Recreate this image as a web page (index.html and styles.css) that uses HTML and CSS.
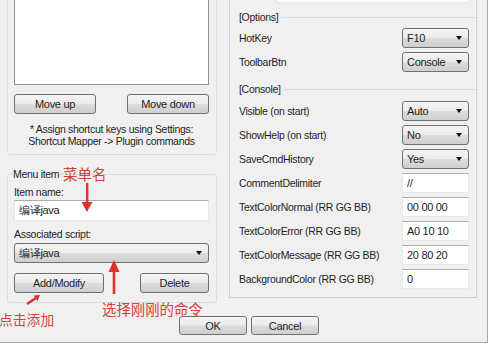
FILE: index.html
```html
<!DOCTYPE html>
<html>
<head>
<meta charset="utf-8">
<link rel="stylesheet" href="styles.css">
</head>
<body>
<div class="dialog">
  <div class="main">
    <div class="left">
      <div class="group group-list">
        <div class="listbox"></div>
        <div class="btn-row">
          <div class="btn w-move">Move up</div>
          <div class="btn w-move">Move down</div>
        </div>
        <p class="note">* Assign shortcut keys using Settings:<br>Shortcut Mapper -&gt; Plugin commands</p>
      </div>
      <fieldset class="group group-item">
        <legend>Menu item</legend>
        <div class="field-label">Item name:</div>
        <div class="textbox wide">编译java</div>
        <div class="field-label second">Associated script:</div>
        <div class="combo wide"><span>编译java</span><span class="caret"></span></div>
        <div class="btn-row lower">
          <div class="btn w-add">Add/Modify</div>
          <div class="btn w-del">Delete</div>
        </div>
      </fieldset>
    </div>
    <div class="panel">
      <div class="script-box"></div>
      <div class="section first"><span>[Options]</span><i class="rule"></i></div>
      <div class="rows">
        <div class="row"><span>HotKey</span><div class="combo ctl"><span>F10</span><span class="caret"></span></div></div>
        <div class="row"><span>ToolbarBtn</span><div class="combo ctl"><span>Console</span><span class="caret"></span></div></div>
      </div>
      <div class="section second"><span>[Console]</span><i class="rule"></i></div>
      <div class="rows">
        <div class="row"><span>Visible (on start)</span><div class="combo ctl"><span>Auto</span><span class="caret"></span></div></div>
        <div class="row"><span>ShowHelp (on start)</span><div class="combo ctl"><span>No</span><span class="caret"></span></div></div>
        <div class="row"><span>SaveCmdHistory</span><div class="combo ctl"><span>Yes</span><span class="caret"></span></div></div>
        <div class="row"><span>CommentDelimiter</span><div class="textbox ctl">//</div></div>
        <div class="row"><span>TextColorNormal (RR GG BB)</span><div class="textbox ctl">00 00 00</div></div>
        <div class="row"><span>TextColorError (RR GG BB)</span><div class="textbox ctl">A0 10 10</div></div>
        <div class="row"><span>TextColorMessage (RR GG BB)</span><div class="textbox ctl">20 80 20</div></div>
        <div class="row"><span>BackgroundColor (RR GG BB)</span><div class="textbox ctl">0</div></div>
      </div>
    </div>
  </div>
  <div class="footer">
    <div class="btn w-ok">OK</div>
    <div class="btn w-ok">Cancel</div>
  </div>

  <span class="note-red n-menu">菜单名</span>
  <span class="note-red n-add">点击添加</span>
  <span class="note-red n-sel">选择刚刚的命令</span>
  <svg class="arrow a-down" width="14" height="32" viewBox="0 0 14 32"><path d="M6 0h2.4v21H6z" fill="#e0322c"/><path d="M1.5 19h11L7 29z" fill="#e0322c"/></svg>
  <svg class="arrow a-up" width="14" height="36" viewBox="0 0 14 36"><path d="M7 0l5.5 12h-4.2v22h-2.6V12H1.5z" fill="#e0322c"/></svg>
  <svg class="arrow a-small" width="16" height="12" viewBox="0 0 16 12"><path d="M1 11L10 5" stroke="#e0322c" stroke-width="2.4"/><path d="M14 2L7.5 2.5l4 5.5z" fill="#e0322c"/></svg>
</div>
</body>
</html>
```
FILE: styles.css
```css
html, body {
  margin: 0;
  padding: 0;
  background: #ffffff;
}
body {
  font-family: "Liberation Sans", Arial, sans-serif;
  font-size: 10.5px;
  letter-spacing: -0.3px;
  color: #1e1e1e;
  width: 491px;
  height: 349px;
  overflow: hidden;
}
.dialog {
  position: relative;
  box-sizing: border-box;
  width: 488px;
  height: 343px;
  background: #f0f0f0;
  border-right: 1px solid #a8a8a8;
  border-bottom: 1px solid #a8a8a8;
  overflow: hidden;
}
.main {
  display: flex;
  align-items: flex-start;
  margin-top: -20px;
}
.left {
  width: 210px;
  margin-left: 7px;
  display: flex;
  flex-direction: column;
}
.group {
  border: 1px solid #d5dfe5;
  border-radius: 3px;
  box-sizing: border-box;
}
.group-list {
  padding: 5px 7px 7px 6px;
}
.listbox {
  height: 99px;
  box-sizing: border-box;
  background: #fff;
  border: 1px solid #8e9299;
}
.btn-row {
  display: flex;
  justify-content: space-between;
  margin-top: 9px;
}
.btn-row.lower {
  margin-top: 10px;
}
.btn {
  box-sizing: border-box;
  height: 20px;
  border: 1px solid #707070;
  border-radius: 3px;
  background: linear-gradient(#f4f4f4 0%, #ebebeb 48%, #dcdcdc 52%, #cfcfcf 100%);
  display: flex;
  align-items: center;
  justify-content: center;
  line-height: 12px;
  font-size: 11px;
}
.w-move { width: 82px; }
.w-add { width: 90px; }
.w-del { width: 69px; }
.note {
  margin: 9px 0 0;
  text-align: center;
  line-height: 12px;
}
.group-item {
  margin: 13px 0 0;
  padding: 6px 7px 9px 6px;
  min-width: 0;
}
.group-item legend {
  padding: 0 1px;
  margin-left: -2px;
  line-height: 12px;
  font-size: 10.5px;
}
.field-label {
  line-height: 12px;
}
.field-label.second {
  margin-top: 7px;
}
.textbox {
  box-sizing: border-box;
  height: 21px;
  background: #fff;
  border: 1px solid #e3e9ef;
  border-top-color: #abadb3;
  padding: 0 4px;
  display: flex;
  align-items: center;
  font-size: 11px;
}
.textbox.wide {
  margin-top: 2px;
}
.combo {
  box-sizing: border-box;
  height: 20px;
  border: 1px solid #707070;
  border-radius: 3px;
  background: linear-gradient(#f4f4f4 0%, #ebebeb 48%, #dcdcdc 52%, #cfcfcf 100%);
  display: flex;
  align-items: center;
  justify-content: space-between;
  padding: 0 6px 0 4px;
  font-size: 11px;
}
.combo.wide {
  margin-top: 3px;
}
.caret {
  width: 0;
  height: 0;
  border-left: 3.5px solid transparent;
  border-right: 3.5px solid transparent;
  border-top: 4px solid #111;
}
.panel {
  box-sizing: border-box;
  width: 248px;
  margin-left: 12px;
  border: 1px solid #cfcfcf;
  padding: 0 7px 8px 9px;
}
.script-box {
  box-sizing: border-box;
  height: 22px;
  margin-left: 38px;
  width: 193px;
  background: #fff;
  border: 1px solid #e3e9ef;
}
.section {
  display: flex;
  align-items: center;
  gap: 3px;
  line-height: 12px;
  margin-right: -7px;
}
.section.first {
  margin-top: 8px;
  margin-bottom: 5px;
}
.section.second {
  margin-top: 11px;
  margin-bottom: 6px;
}
.rule {
  flex: 1;
  height: 1px;
  background: #dcdcdc;
}
.rows {
  display: flex;
  flex-direction: column;
  gap: 4px;
}
.row {
  display: flex;
  justify-content: space-between;
  align-items: center;
  height: 20px;
}
.ctl {
  width: 67px;
}
.row .textbox {
  height: 20px;
}
.footer {
  display: flex;
  gap: 4px;
  margin-top: 13px;
  padding-left: 179px;
}
.w-ok {
  width: 68px;
  height: 19px;
}
.note-red {
  position: absolute;
  font-family: "Noto Sans CJK SC", sans-serif;
  color: #d8403a;
  letter-spacing: 0;
  white-space: nowrap;
}
.n-menu {
  left: 63px;
  top: 166px;
  font-size: 14.5px;
  line-height: 16px;
}
.n-add {
  left: -1px;
  top: 311px;
  font-size: 13.8px;
  line-height: 16px;
}
.n-sel {
  left: 102px;
  top: 301px;
  font-size: 14.4px;
  line-height: 16px;
}
.arrow {
  position: absolute;
}
.a-down {
  left: 80px;
  top: 183px;
}
.a-up {
  left: 107px;
  top: 260px;
}
.a-small {
  left: 26px;
  top: 293px;
}
```
